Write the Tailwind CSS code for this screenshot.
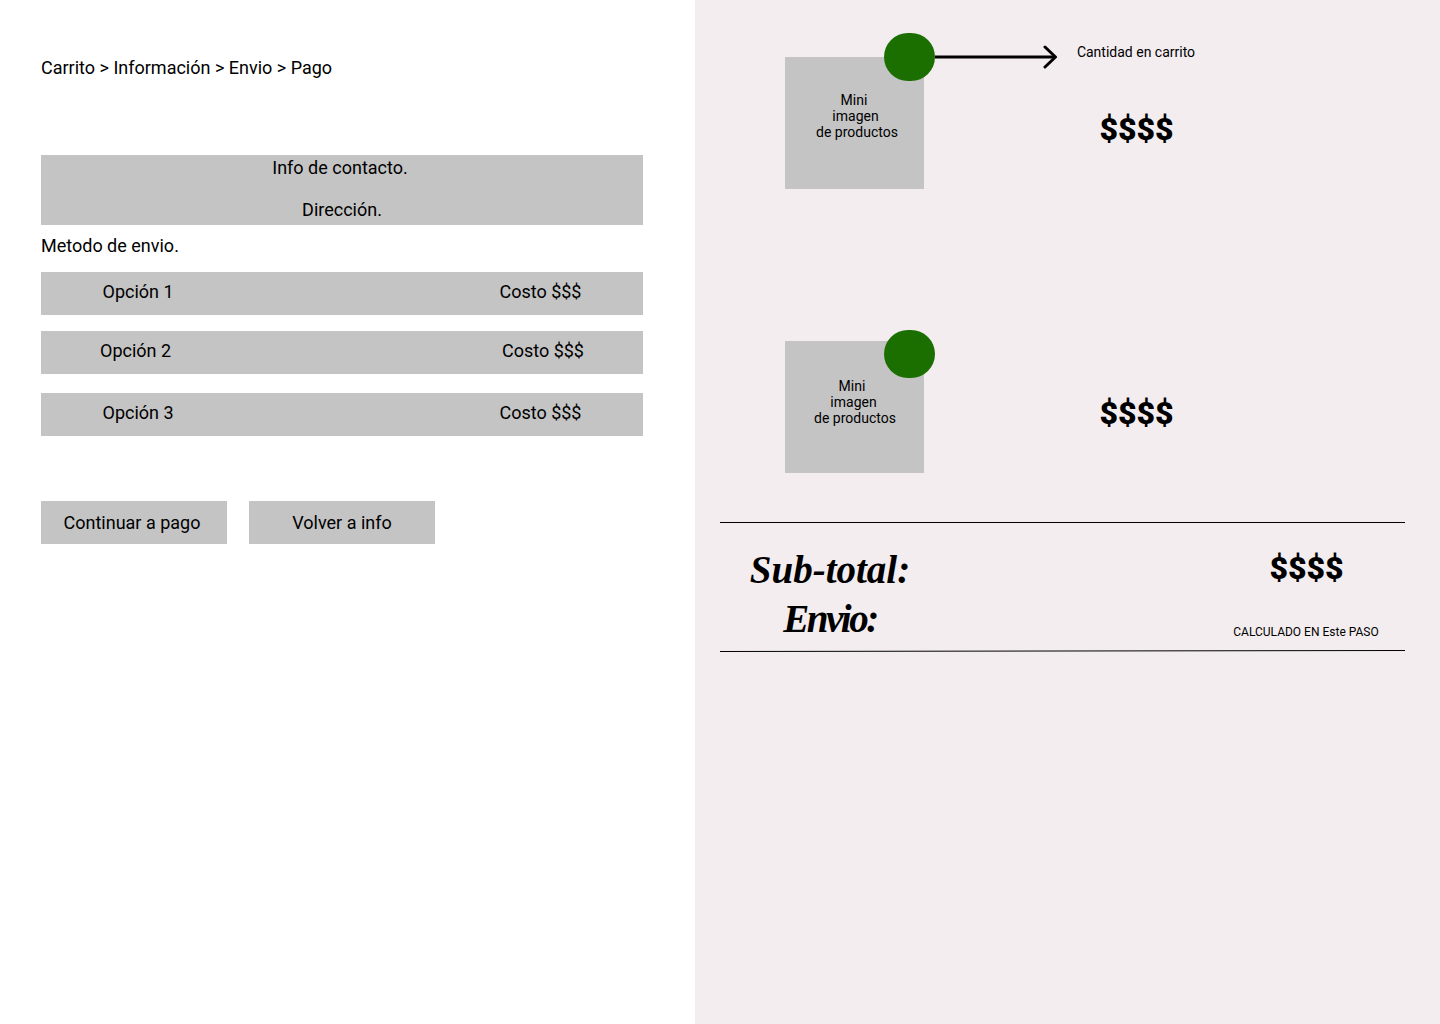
<!DOCTYPE html>
<html lang="es">

<head>
    <meta charset="UTF-8">
    <meta name="viewport" content="width=device-width, initial-scale=1.0">
    <title>Checkout - Envio</title>
    <script src="https://cdn.jsdelivr.net/npm/@tailwindcss/browser@4"></script>
</head>

<body class="bg-white">
    <div class="min-h-[1024px] flex font-['Roboto',sans-serif] text-black">
        <!-- Left column -->
        <main class="w-[695px] pl-[41px] pt-[57px] text-[18px] leading-[21px]">
            <!-- Breadcrumb -->
            <p>Carrito &gt; Información &gt; Envio &gt; Pago</p>
            <!-- Contact summary -->
            <div class="w-[602px] h-[70px] mt-[77px] pt-[2px] bg-[#c4c4c4] text-center">
                <p class="pr-[4px]">Info de contacto.</p>
                <p class="mt-[21px]">Dirección.</p>
            </div>
            <p class="mt-[10px]">Metodo de envio.</p>
            <!-- Shipping options -->
            <div class="w-[602px] h-[43px] mt-[16px] pl-[61.500px] pr-[61.500px] pt-[9px] flex justify-between bg-[#c4c4c4]">
                <span>Opción 1</span>
                <span>Costo $$$</span>
            </div>
            <div class="w-[602px] h-[43px] mt-[16px] pl-[59px] pr-[59px] pt-[9px] flex justify-between bg-[#c4c4c4]">
                <span>Opción 2</span>
                <span>Costo $$$</span>
            </div>
            <div class="w-[602px] h-[43px] mt-[19px] pl-[61.500px] pr-[61.500px] pt-[9px] flex justify-between bg-[#c4c4c4]">
                <span>Opción 3</span>
                <span>Costo $$$</span>
            </div>
            <!-- Buttons -->
            <div class="flex gap-[22px] mt-[65px]">
                <button type="button" class="w-[186px] h-[43px] pr-[4px] bg-[#c4c4c4]">Continuar a pago</button>
                <button type="button" class="w-[186px] h-[43px] bg-[#c4c4c4]">Volver a info</button>
            </div>
        </main>

        <!-- Right column -->
        <aside class="w-[745px] bg-[#f3edf0] pl-[25px] pr-[35px] pt-[57px]">
            <!-- Product 1 -->
            <div class="flex pl-[65px]">
                <div class="relative w-[139px] h-[132px] pt-[35px] bg-[#c4c4c4] text-[14px] leading-[16px] text-center">
                    <p class="pr-[1px]">Mini</p>
                    <p class="pl-[2px]">imagen</p>
                    <p class="pl-[5px]">de productos</p>
                    <span class="absolute left-[99px] -top-[24px] w-[51px] h-[48px] rounded-full bg-[#1a6f00]"></span>
                    <svg class="absolute left-[150px] -top-[12px]" width="124" height="24" viewBox="0 0 124 24" fill="none" stroke="#000" stroke-width="3" stroke-linecap="round" stroke-linejoin="round">
                        <path d="M0 12H120" stroke-linecap="butt" />
                        <path d="M110 2L120.500 12L110 22" />
                    </svg>
                </div>
                <div class="relative w-[152px] ml-[136px] text-center">
                    <p class="absolute -top-[13px] inset-x-0 text-[14px] leading-[16px]">Cantidad en carrito</p>
                    <p class="mt-[52px] pl-[1px] text-[32px] leading-[40px] font-black">$$$$</p>
                </div>
            </div>
            <!-- Product 2 -->
            <div class="flex pl-[65px] mt-[152px]">
                <div class="relative w-[139px] h-[132px] pt-[37px] bg-[#c4c4c4] text-[14px] leading-[16px] text-center">
                    <p class="pr-[5px]">Mini</p>
                    <p class="pr-[2px]">imagen</p>
                    <p class="pl-[1px]">de productos</p>
                    <span class="absolute left-[99px] -top-[11px] w-[51px] h-[48px] rounded-full bg-[#1a6f00]"></span>
                </div>
                <div class="w-[152px] ml-[136px] text-center">
                    <p class="mt-[52px] pl-[1px] text-[32px] leading-[40px] font-black">$$$$</p>
                </div>
            </div>
            <!-- Totals -->
            <div class="flex justify-between h-[128px] mt-[49px] border-t border-black">
                <div class="w-[220px] text-center font-['Liberation_Serif',serif] italic font-bold text-[39px] leading-[48px] pt-[23px]">
                    <p>Sub-total:</p>
                    <p class="pt-[1px] tracking-[-2.500px]">Envio:</p>
                </div>
                <div class="w-[160px] mr-[19px] text-center">
                    <p class="mt-[25px] pl-[1px] text-[32px] leading-[40px] font-black">$$$$</p>
                    <p class="mt-[37px] text-[12px] leading-[14px] whitespace-nowrap">CALCULADO EN Este PASO</p>
                </div>
            </div>
            <!-- Bottom rule, very slightly tilted -->
            <svg class="block" width="685" height="2" viewBox="0 0 685 2" fill="none">
                <line x1="0" y1="1.500" x2="685" y2="0.500" stroke="#000" stroke-width="1" />
            </svg>
        </aside>
    </div>
</body>

</html>
